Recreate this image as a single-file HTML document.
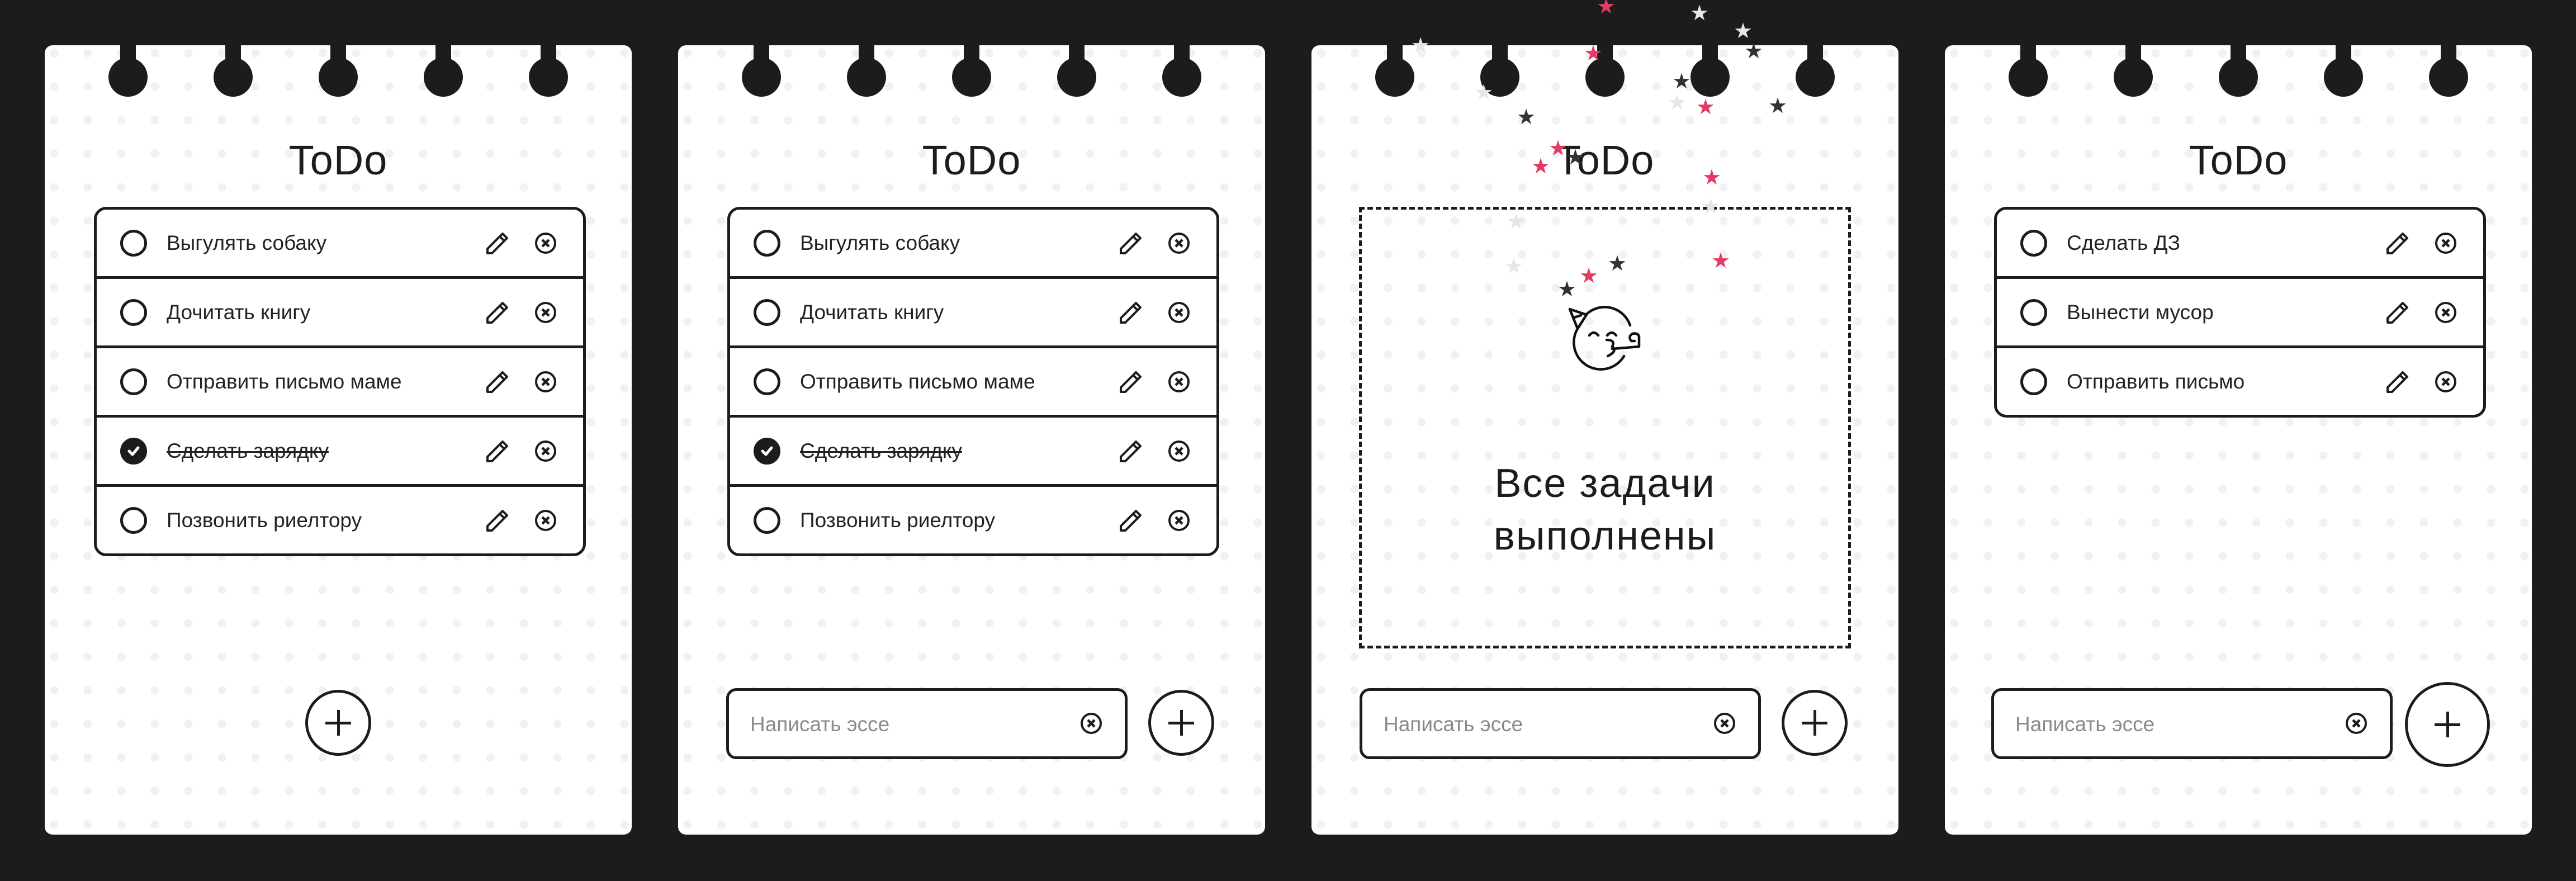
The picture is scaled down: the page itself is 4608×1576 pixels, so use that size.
<!DOCTYPE html>
<html><head><meta charset="utf-8">
<style>
*{box-sizing:border-box;margin:0;padding:0}
html,body{width:4608px;height:1576px;overflow:hidden;background:#1c1c1c;font-family:"Liberation Sans","DejaVu Sans",sans-serif;color:#1c1c1c}
.card{position:absolute;top:81px;width:1050px;height:1412px;background-color:#fff;border-radius:14px;
background-image:radial-gradient(circle,#f1f1f1 7px,transparent 8px);background-size:60px 60px;background-position:-13px -16px}
.ring{position:absolute;top:0;width:70px;height:92px}
.ring:before{content:"";position:absolute;left:21px;top:0;width:28px;height:40px;background:#1c1c1c}
.ring:after{content:"";position:absolute;left:0;top:22px;width:70px;height:70px;border-radius:50%;background:#1c1c1c}
.title{position:absolute;left:0;right:0;top:161px;text-align:center;font-size:74px;line-height:90px;letter-spacing:1px}
.list{position:absolute;left:88px;top:289px;width:880px;border:5px solid #1c1c1c;border-radius:22px;background:#fff}
.row{position:relative;height:124px;border-top:5px solid #1c1c1c}
.row:first-child{border-top:none;height:119px}
.cb{position:absolute;left:42px;top:50%;margin-top:-24px;width:48px;height:48px;border:5px solid #1c1c1c;border-radius:50%}
.cb.on{background:#1c1c1c}
.txt{position:absolute;left:125px;top:50%;margin-top:-24px;font-size:37px;line-height:48px;color:#222}
.txt.done{text-decoration:line-through;text-decoration-thickness:3px}
.pen{position:absolute;left:697px;top:50%;margin-top:-20px}
.xc{position:absolute;left:783px;top:50%;margin-top:-20px}
.plus{position:absolute;border:5px solid #1c1c1c;border-radius:50%;background:#fff}
.plus:before,.plus:after{content:"";position:absolute;left:50%;top:50%;background:#1c1c1c}
.plus:before{width:46px;height:5px;margin:-2.5px 0 0 -23px}
.plus:after{width:5px;height:46px;margin:-23px 0 0 -2.5px}
.inp{position:absolute;top:1150px;width:718px;height:127px;border:5px solid #1c1c1c;border-radius:18px;background:#fff}
.inp span{position:absolute;left:38px;top:36px;font-size:37px;line-height:48px;color:#8a8a8a}
.inp svg{position:absolute;left:628px;top:38px}
.star{position:absolute;font-size:38px;line-height:38px;width:38px;text-align:center;margin:-19px 0 0 -19px}
.r{color:#e23c63}.d{color:#333}.l{color:#e6e6e6}
</style></head><body>

<!-- CARD 1 -->
<div class="card" style="left:80px">
 <div class="ring" style="left:114px"></div><div class="ring" style="left:302px"></div><div class="ring" style="left:490px"></div><div class="ring" style="left:678px"></div><div class="ring" style="left:866px"></div>
 <div class="title">ToDo</div>
 <div class="list">
  <div class="row"><div class="cb"></div><div class="txt">Выгулять собаку</div>
   <svg class="pen" width="40" height="40" viewBox="0 0 40 40"><path d="M2 38V30L29 3L37 11L10 38Z M24 8L32 16" fill="none" stroke="#1c1c1c" stroke-width="4" stroke-linejoin="round"/></svg>
   <svg class="xc" width="40" height="40" viewBox="0 0 40 40"><circle cx="20" cy="20" r="17" fill="none" stroke="#1c1c1c" stroke-width="4"/><path d="M14 14L26 26M26 14L14 26" stroke="#1c1c1c" stroke-width="4.5"/></svg></div>
  <div class="row"><div class="cb"></div><div class="txt">Дочитать книгу</div>
   <svg class="pen" width="40" height="40" viewBox="0 0 40 40"><path d="M2 38V30L29 3L37 11L10 38Z M24 8L32 16" fill="none" stroke="#1c1c1c" stroke-width="4" stroke-linejoin="round"/></svg>
   <svg class="xc" width="40" height="40" viewBox="0 0 40 40"><circle cx="20" cy="20" r="17" fill="none" stroke="#1c1c1c" stroke-width="4"/><path d="M14 14L26 26M26 14L14 26" stroke="#1c1c1c" stroke-width="4.5"/></svg></div>
  <div class="row"><div class="cb"></div><div class="txt">Отправить письмо маме</div>
   <svg class="pen" width="40" height="40" viewBox="0 0 40 40"><path d="M2 38V30L29 3L37 11L10 38Z M24 8L32 16" fill="none" stroke="#1c1c1c" stroke-width="4" stroke-linejoin="round"/></svg>
   <svg class="xc" width="40" height="40" viewBox="0 0 40 40"><circle cx="20" cy="20" r="17" fill="none" stroke="#1c1c1c" stroke-width="4"/><path d="M14 14L26 26M26 14L14 26" stroke="#1c1c1c" stroke-width="4.5"/></svg></div>
  <div class="row"><div class="cb on"><svg width="38" height="38" viewBox="0 0 38 38"><path d="M11 19L17 25L27 13" fill="none" stroke="#fff" stroke-width="5" stroke-linecap="round" stroke-linejoin="round"/></svg></div><div class="txt done">Сделать зарядку</div>
   <svg class="pen" width="40" height="40" viewBox="0 0 40 40"><path d="M2 38V30L29 3L37 11L10 38Z M24 8L32 16" fill="none" stroke="#1c1c1c" stroke-width="4" stroke-linejoin="round"/></svg>
   <svg class="xc" width="40" height="40" viewBox="0 0 40 40"><circle cx="20" cy="20" r="17" fill="none" stroke="#1c1c1c" stroke-width="4"/><path d="M14 14L26 26M26 14L14 26" stroke="#1c1c1c" stroke-width="4.5"/></svg></div>
  <div class="row"><div class="cb"></div><div class="txt">Позвонить риелтору</div>
   <svg class="pen" width="40" height="40" viewBox="0 0 40 40"><path d="M2 38V30L29 3L37 11L10 38Z M24 8L32 16" fill="none" stroke="#1c1c1c" stroke-width="4" stroke-linejoin="round"/></svg>
   <svg class="xc" width="40" height="40" viewBox="0 0 40 40"><circle cx="20" cy="20" r="17" fill="none" stroke="#1c1c1c" stroke-width="4"/><path d="M14 14L26 26M26 14L14 26" stroke="#1c1c1c" stroke-width="4.5"/></svg></div>
 </div>
 <div class="plus" style="left:466px;top:1153px;width:118px;height:118px"></div>
</div>

<!-- CARD 2 -->
<div class="card" style="left:1213px">
 <div class="ring" style="left:114px"></div><div class="ring" style="left:302px"></div><div class="ring" style="left:490px"></div><div class="ring" style="left:678px"></div><div class="ring" style="left:866px"></div>
 <div class="title">ToDo</div>
 <div class="list">
  <div class="row"><div class="cb"></div><div class="txt">Выгулять собаку</div>
   <svg class="pen" width="40" height="40" viewBox="0 0 40 40"><path d="M2 38V30L29 3L37 11L10 38Z M24 8L32 16" fill="none" stroke="#1c1c1c" stroke-width="4" stroke-linejoin="round"/></svg>
   <svg class="xc" width="40" height="40" viewBox="0 0 40 40"><circle cx="20" cy="20" r="17" fill="none" stroke="#1c1c1c" stroke-width="4"/><path d="M14 14L26 26M26 14L14 26" stroke="#1c1c1c" stroke-width="4.5"/></svg></div>
  <div class="row"><div class="cb"></div><div class="txt">Дочитать книгу</div>
   <svg class="pen" width="40" height="40" viewBox="0 0 40 40"><path d="M2 38V30L29 3L37 11L10 38Z M24 8L32 16" fill="none" stroke="#1c1c1c" stroke-width="4" stroke-linejoin="round"/></svg>
   <svg class="xc" width="40" height="40" viewBox="0 0 40 40"><circle cx="20" cy="20" r="17" fill="none" stroke="#1c1c1c" stroke-width="4"/><path d="M14 14L26 26M26 14L14 26" stroke="#1c1c1c" stroke-width="4.5"/></svg></div>
  <div class="row"><div class="cb"></div><div class="txt">Отправить письмо маме</div>
   <svg class="pen" width="40" height="40" viewBox="0 0 40 40"><path d="M2 38V30L29 3L37 11L10 38Z M24 8L32 16" fill="none" stroke="#1c1c1c" stroke-width="4" stroke-linejoin="round"/></svg>
   <svg class="xc" width="40" height="40" viewBox="0 0 40 40"><circle cx="20" cy="20" r="17" fill="none" stroke="#1c1c1c" stroke-width="4"/><path d="M14 14L26 26M26 14L14 26" stroke="#1c1c1c" stroke-width="4.5"/></svg></div>
  <div class="row"><div class="cb on"><svg width="38" height="38" viewBox="0 0 38 38"><path d="M11 19L17 25L27 13" fill="none" stroke="#fff" stroke-width="5" stroke-linecap="round" stroke-linejoin="round"/></svg></div><div class="txt done">Сделать зарядку</div>
   <svg class="pen" width="40" height="40" viewBox="0 0 40 40"><path d="M2 38V30L29 3L37 11L10 38Z M24 8L32 16" fill="none" stroke="#1c1c1c" stroke-width="4" stroke-linejoin="round"/></svg>
   <svg class="xc" width="40" height="40" viewBox="0 0 40 40"><circle cx="20" cy="20" r="17" fill="none" stroke="#1c1c1c" stroke-width="4"/><path d="M14 14L26 26M26 14L14 26" stroke="#1c1c1c" stroke-width="4.5"/></svg></div>
  <div class="row"><div class="cb"></div><div class="txt">Позвонить риелтору</div>
   <svg class="pen" width="40" height="40" viewBox="0 0 40 40"><path d="M2 38V30L29 3L37 11L10 38Z M24 8L32 16" fill="none" stroke="#1c1c1c" stroke-width="4" stroke-linejoin="round"/></svg>
   <svg class="xc" width="40" height="40" viewBox="0 0 40 40"><circle cx="20" cy="20" r="17" fill="none" stroke="#1c1c1c" stroke-width="4"/><path d="M14 14L26 26M26 14L14 26" stroke="#1c1c1c" stroke-width="4.5"/></svg></div>
 </div>
 <div class="inp" style="left:86px"><span>Написать эссе</span><svg width="40" height="40" viewBox="0 0 40 40"><circle cx="20" cy="20" r="17" fill="none" stroke="#1c1c1c" stroke-width="4"/><path d="M14 14L26 26M26 14L14 26" stroke="#1c1c1c" stroke-width="4.5"/></svg></div>
 <div class="plus" style="left:841px;top:1153px;width:118px;height:118px"></div>
</div>

<!-- CARD 3 -->
<div class="card" style="left:2346px">
 <div class="ring" style="left:114px"></div><div class="ring" style="left:302px"></div><div class="ring" style="left:490px"></div><div class="ring" style="left:678px"></div><div class="ring" style="left:866px"></div>
 <div class="title">ToDo</div>
 <div style="position:absolute;left:85px;top:289px;width:880px;height:790px;border:5px dashed #1c1c1c"></div>
 <div style="position:absolute;left:0;right:0;top:737px;text-align:center;font-size:72px;line-height:94px;letter-spacing:2px">Все задачи<br>выполнены</div>
 <div class="inp" style="left:86px"><span>Написать эссе</span><svg width="40" height="40" viewBox="0 0 40 40"><circle cx="20" cy="20" r="17" fill="none" stroke="#1c1c1c" stroke-width="4"/><path d="M14 14L26 26M26 14L14 26" stroke="#1c1c1c" stroke-width="4.5"/></svg></div>
 <div class="plus" style="left:841px;top:1153px;width:118px;height:118px"></div>
</div>

<!-- CARD 4 -->
<div class="card" style="left:3479px">
 <div class="ring" style="left:114px"></div><div class="ring" style="left:302px"></div><div class="ring" style="left:490px"></div><div class="ring" style="left:678px"></div><div class="ring" style="left:866px"></div>
 <div class="title">ToDo</div>
 <div class="list">
  <div class="row"><div class="cb"></div><div class="txt">Сделать ДЗ</div>
   <svg class="pen" width="40" height="40" viewBox="0 0 40 40"><path d="M2 38V30L29 3L37 11L10 38Z M24 8L32 16" fill="none" stroke="#1c1c1c" stroke-width="4" stroke-linejoin="round"/></svg>
   <svg class="xc" width="40" height="40" viewBox="0 0 40 40"><circle cx="20" cy="20" r="17" fill="none" stroke="#1c1c1c" stroke-width="4"/><path d="M14 14L26 26M26 14L14 26" stroke="#1c1c1c" stroke-width="4.5"/></svg></div>
  <div class="row"><div class="cb"></div><div class="txt">Вынести мусор</div>
   <svg class="pen" width="40" height="40" viewBox="0 0 40 40"><path d="M2 38V30L29 3L37 11L10 38Z M24 8L32 16" fill="none" stroke="#1c1c1c" stroke-width="4" stroke-linejoin="round"/></svg>
   <svg class="xc" width="40" height="40" viewBox="0 0 40 40"><circle cx="20" cy="20" r="17" fill="none" stroke="#1c1c1c" stroke-width="4"/><path d="M14 14L26 26M26 14L14 26" stroke="#1c1c1c" stroke-width="4.5"/></svg></div>
  <div class="row"><div class="cb"></div><div class="txt">Отправить письмо</div>
   <svg class="pen" width="40" height="40" viewBox="0 0 40 40"><path d="M2 38V30L29 3L37 11L10 38Z M24 8L32 16" fill="none" stroke="#1c1c1c" stroke-width="4" stroke-linejoin="round"/></svg>
   <svg class="xc" width="40" height="40" viewBox="0 0 40 40"><circle cx="20" cy="20" r="17" fill="none" stroke="#1c1c1c" stroke-width="4"/><path d="M14 14L26 26M26 14L14 26" stroke="#1c1c1c" stroke-width="4.5"/></svg></div>
 </div>
 <div class="inp" style="left:83px"><span>Написать эссе</span><svg width="40" height="40" viewBox="0 0 40 40"><circle cx="20" cy="20" r="17" fill="none" stroke="#1c1c1c" stroke-width="4"/><path d="M14 14L26 26M26 14L14 26" stroke="#1c1c1c" stroke-width="4.5"/></svg></div>
 <div class="plus" style="left:823px;top:1139px;width:152px;height:152px"></div>
</div>

<!-- party face -->
<svg style="position:absolute;left:2780px;top:520px" width="180" height="150" viewBox="0 0 180 150" fill="none" stroke="#111" stroke-width="4.5" stroke-linecap="round" stroke-linejoin="round">
 <path d="M136 62 A48 48 0 0 0 58 42"/>
 <path d="M42 68 A48 48 0 0 0 125 117"/>
 <path d="M28 33 L58 43 L42 68 Z M36 48 L48 44"/>
 <path d="M63 80 Q71 70 79 80 M95 80 Q103 70 111 80"/>
 <path d="M94 88 Q110 88 104 100 Q114 108 96 117"/>
 <path d="M104 104 L152 100 L152 82 Q150 75 140 77 Q132 82 138 90 L144 90"/>
</svg>

<!-- stars -->
<div class="star r" style="left:2873px;top:12px">★</div>
<div class="star l" style="left:3040px;top:24px">★</div>
<div class="star l" style="left:3118px;top:56px">★</div>
<div class="star d" style="left:3137px;top:92px">★</div>
<div class="star r" style="left:2850px;top:96px">★</div>
<div class="star l" style="left:2541px;top:82px">★</div>
<div class="star d" style="left:3008px;top:146px">★</div>
<div class="star l" style="left:2654px;top:166px">★</div>
<div class="star l" style="left:3000px;top:184px">★</div>
<div class="star r" style="left:3051px;top:192px">★</div>
<div class="star d" style="left:3180px;top:190px">★</div>
<div class="star d" style="left:2730px;top:210px">★</div>
<div class="star r" style="left:2787px;top:266px">★</div>
<div class="star r" style="left:2756px;top:298px">★</div>
<div class="star d" style="left:2818px;top:282px">★</div>
<div class="star r" style="left:3062px;top:318px">★</div>
<div class="star l" style="left:3060px;top:370px">★</div>
<div class="star l" style="left:2712px;top:397px">★</div>
<div class="star l" style="left:2708px;top:477px">★</div>
<div class="star d" style="left:2893px;top:472px">★</div>
<div class="star r" style="left:2842px;top:494px">★</div>
<div class="star r" style="left:3078px;top:467px">★</div>
<div class="star d" style="left:2803px;top:518px">★</div>
</body></html>
